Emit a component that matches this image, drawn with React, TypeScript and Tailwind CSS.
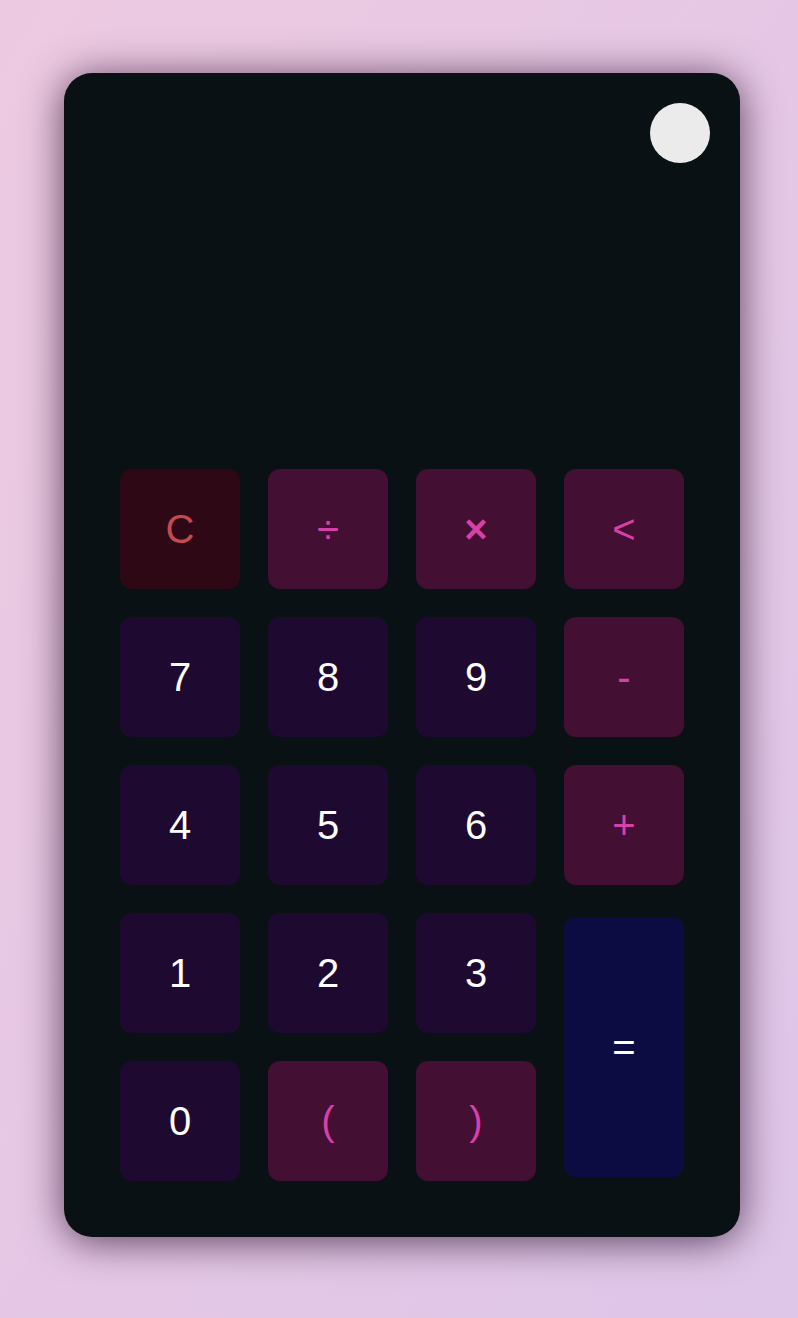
import React from "react";

type K = { label: string; kind: "clear" | "op" | "num" | "eq"; extra?: string };

const rows: K[][] = [
  [
    { label: "C", kind: "clear" },
    { label: "÷", kind: "op" },
    { label: "×", kind: "op", extra: "font-bold" },
    { label: "<", kind: "op" },
  ],
  [
    { label: "7", kind: "num" },
    { label: "8", kind: "num" },
    { label: "9", kind: "num" },
    { label: "-", kind: "op" },
  ],
  [
    { label: "4", kind: "num" },
    { label: "5", kind: "num" },
    { label: "6", kind: "num" },
    { label: "+", kind: "op" },
  ],
];

function Btn({ k, className = "" }: { k: K; className?: string }) {
  const styles: Record<K["kind"], string> = {
    clear: "bg-[#2e0915] text-[#c44a52]",
    op: "bg-[#430f33] text-[#d840a9]",
    num: "bg-[#1e0931] text-white",
    eq: "bg-[#0d0c42] text-white",
  };
  return (
    <div
      className={`flex items-center justify-center rounded-[12px] text-[40px] leading-none ${styles[k.kind]} ${k.extra ?? ""} ${className}`}
    >
      {k.label}
    </div>
  );
}

export default function App() {
  return (
    <div
      className="min-h-[1318px] w-full bg-gradient-to-br from-[#edc9e1] to-[#dec6e9] pt-[73px] pl-[64px]"
      style={{ fontFamily: '"Liberation Sans", Arial, sans-serif' }}
    >
      <div className="w-[676px] h-[1164px] rounded-[28px] bg-[#0a1114] shadow-[0_4px_40px_rgba(30,0,30,0.7)] px-[56px] pt-[30px] pb-[56px] flex flex-col">
        <div className="flex justify-end mr-[-26px]">
          <div className="w-[60px] h-[60px] rounded-full bg-[#ebebeb]" />
        </div>
        <div className="h-[306px]" />
        <div className="grid grid-cols-[120px_120px_120px_120px] auto-rows-[120px] gap-[28px]">
          {rows.flat().map((k, i) => (
            <Btn key={i} k={k} />
          ))}
          <Btn k={{ label: "1", kind: "num" }} />
          <Btn k={{ label: "2", kind: "num" }} />
          <Btn k={{ label: "3", kind: "num" }} />
          <Btn
            k={{ label: "=", kind: "eq" }}
            className="row-span-2 h-[260px] self-center"
          />
          <Btn k={{ label: "0", kind: "num" }} />
          <Btn k={{ label: "(", kind: "op" }} />
          <Btn k={{ label: ")", kind: "op" }} />
        </div>
      </div>
    </div>
  );
}
